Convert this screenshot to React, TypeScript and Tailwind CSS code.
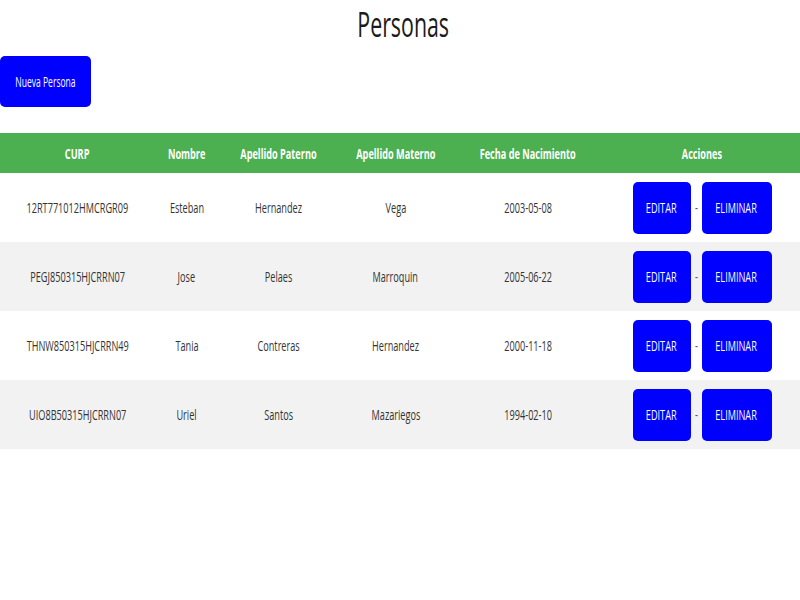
import React from "react";

const S = "inline-block whitespace-nowrap scale-x-[0.61]";

function T({ children }: { children: React.ReactNode }) {
  return <span className={S}>{children}</span>;
}

const rows = [
  ["12RT771012HMCRGR09", "Esteban", "Hernandez", "Vega", "2003-05-08"],
  ["PEGJ850315HJCRRN07", "Jose", "Pelaes", "Marroquin", "2005-06-22"],
  ["THNW850315HJCRRN49", "Tania", "Contreras", "Hernandez", "2000-11-18"],
  ["UIO8B50315HJCRRN07", "Uriel", "Santos", "Mazariegos", "1994-02-10"],
];

const headers = ["CURP", "Nombre", "Apellido Paterno", "Apellido Materno", "Fecha de Nacimiento", "Acciones"];

const grid = "grid grid-cols-[155px_63px_121px_113px_152px_196px]";

export default function App() {
  return (
    <div className="w-[800px] h-[600px] bg-white" style={{ fontFamily: "'Open Sans', 'Noto Sans', sans-serif" }}>
      <div className="pt-[6px] h-[41px] flex justify-center text-[35px] leading-[35px] text-[#1b1b1b] pl-[6px]">
        <T>Personas</T>
      </div>
      <div className="mt-[15px]">
        <button className="w-[91px] h-[51px] bg-[#0000ff] text-white rounded-[5px] text-[14px] flex items-center justify-center">
          <T>Nueva Persona</T>
        </button>
      </div>
      <div className="mt-[26px]">
        <div className={`${grid} h-[40px] bg-[#4caf50] text-white font-bold text-[15px]`}>
          {headers.map((h) => (
            <div key={h} className="flex items-center justify-center">
              <T>{h}</T>
            </div>
          ))}
        </div>
        {rows.map((r, i) => (
          <div key={i} className={`${grid} h-[69px] text-[15px] text-[#333] ${i % 2 === 1 ? "bg-[#f2f2f2]" : "bg-white"}`}>
            {r.map((c, j) => (
              <div key={j} className="flex items-center justify-center">
                <T>{c}</T>
              </div>
            ))}
            <div className="flex items-center justify-center">
              <button className="w-[58px] h-[52px] bg-[#0000ff] text-white rounded-[5px] text-[15px] flex items-center justify-center">
                <T>EDITAR</T>
              </button>
              <span className="w-[11px] text-center text-[#555] text-[15px]"><T>-</T></span>
              <button className="w-[70px] h-[52px] bg-[#0000ff] text-white rounded-[5px] text-[15px] flex items-center justify-center">
                <T>ELIMINAR</T>
              </button>
            </div>
          </div>
        ))}
      </div>
    </div>
  );
}
